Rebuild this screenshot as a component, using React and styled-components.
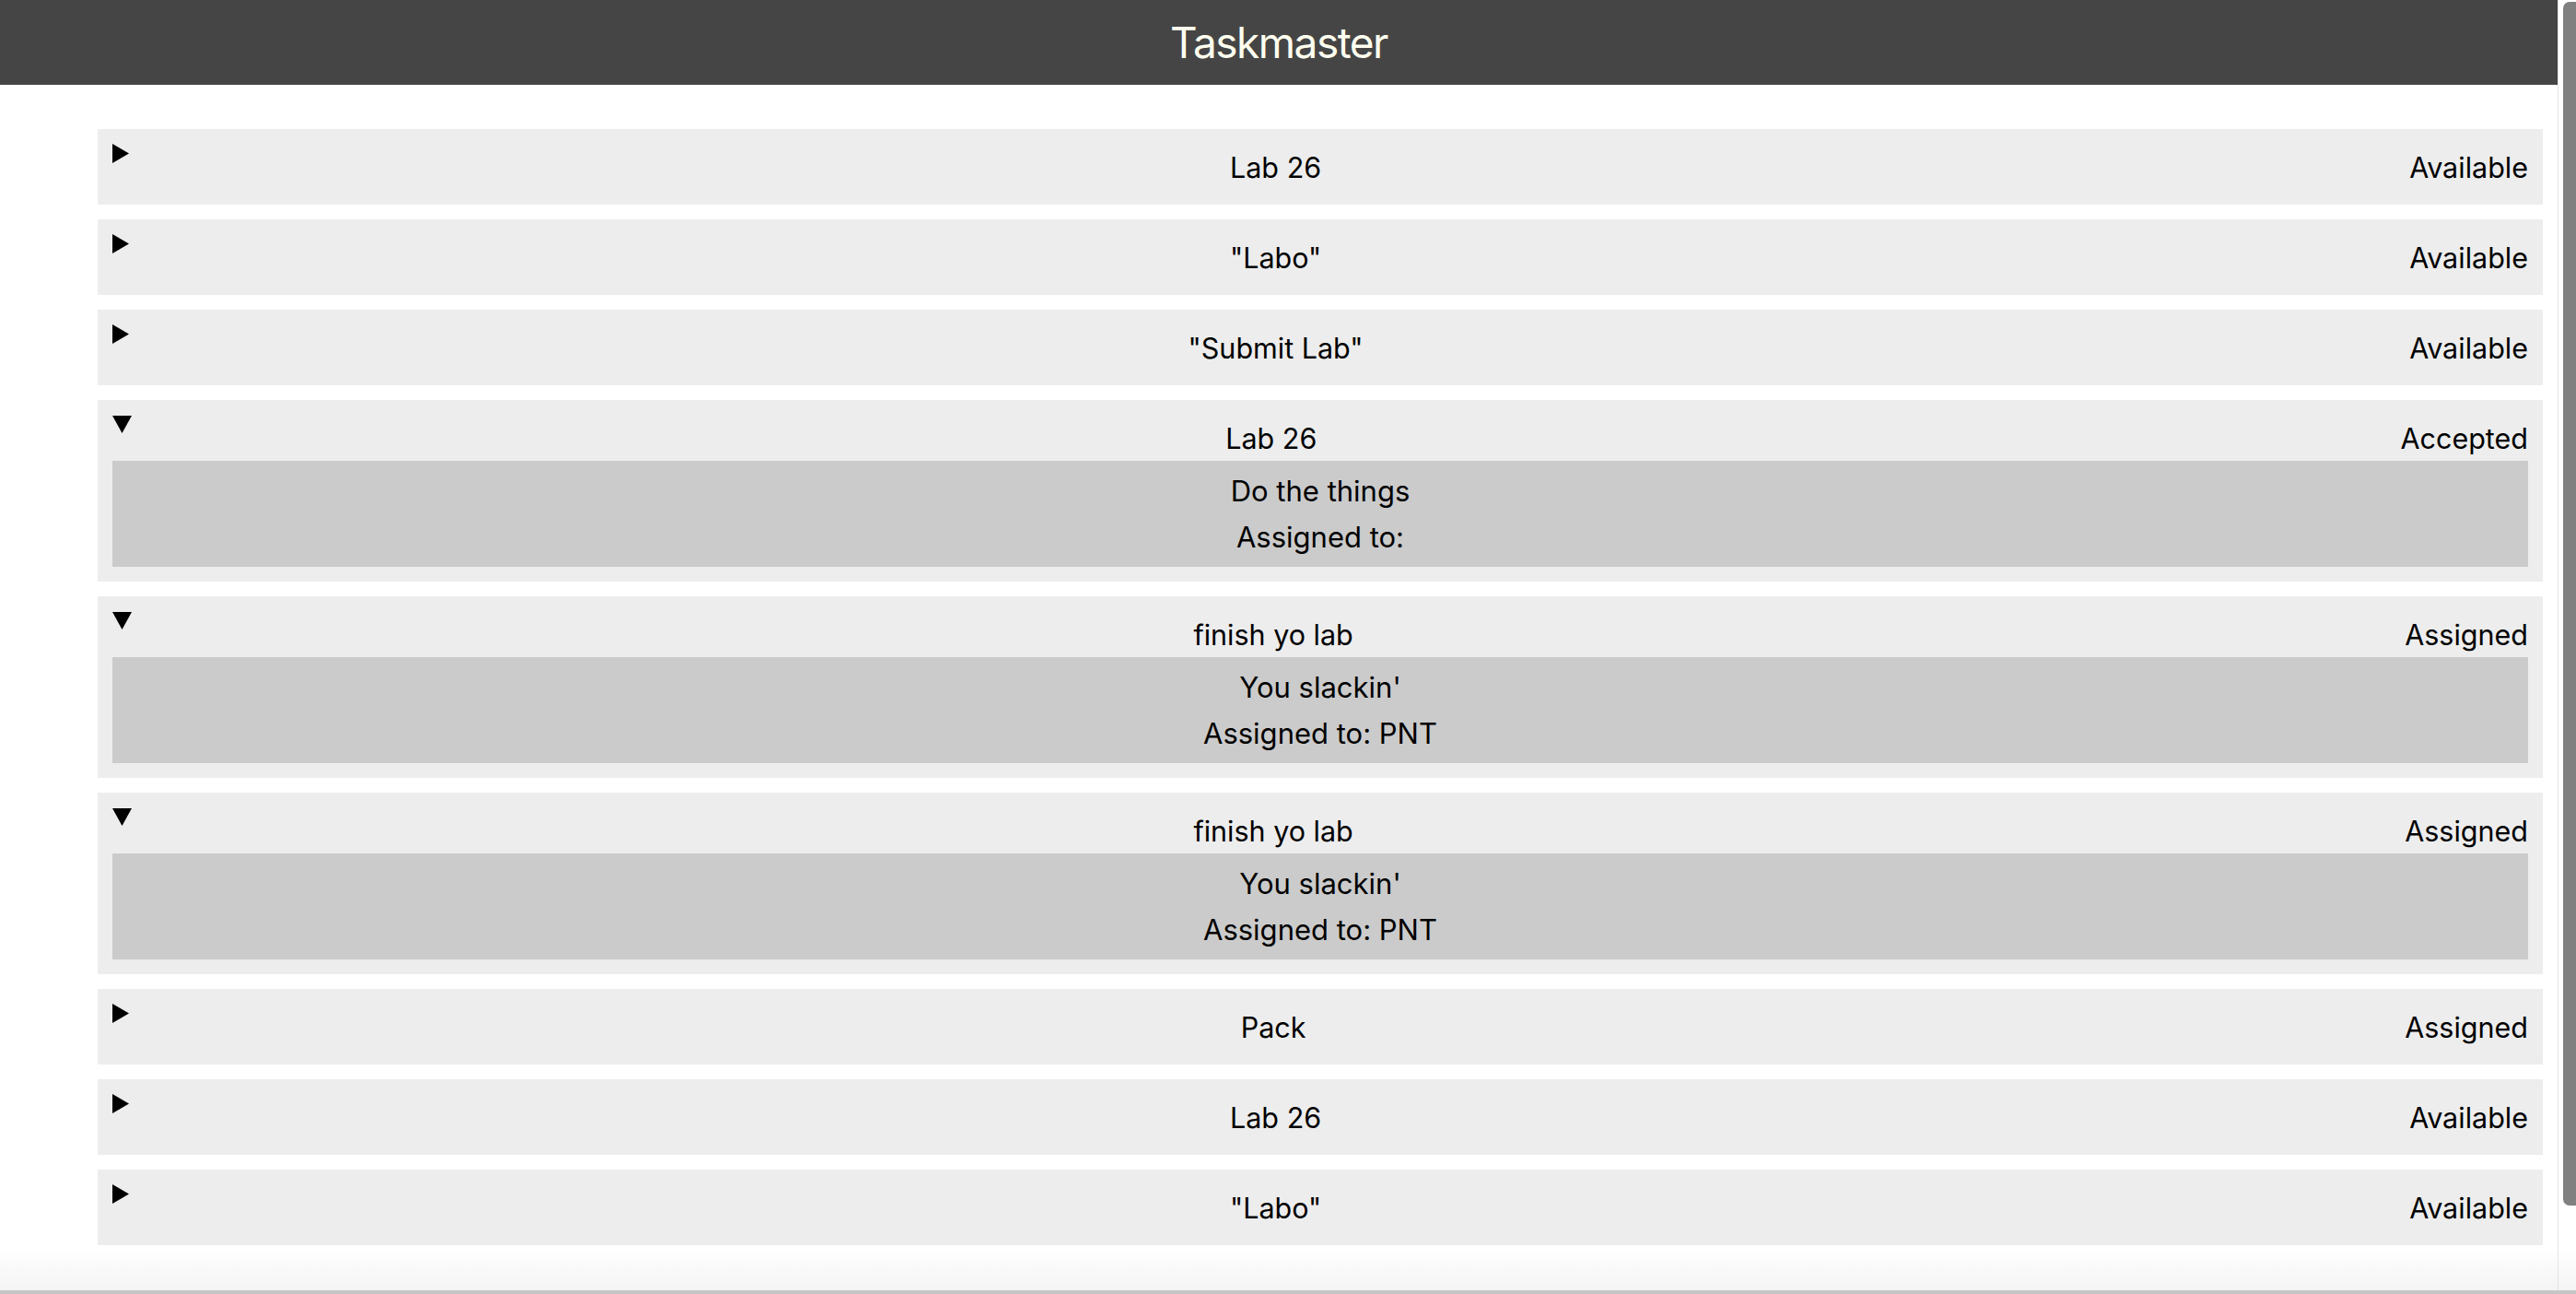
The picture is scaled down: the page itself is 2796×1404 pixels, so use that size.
import React from "react";
import styled, { createGlobalStyle } from "styled-components";

const Global = createGlobalStyle`
  html, body { margin: 0; padding: 0; height: 100%; overflow: hidden; }
  body { font-family: Inter, "Noto Sans", "Liberation Sans", sans-serif; color: #000; background: #fff; }
  #root { height: 100%; }
`;

const Page = styled.div`
  height: 1404px;
  display: flex;
  flex-direction: column;
  background: linear-gradient(to bottom, #ffffff 0, #ffffff 1352px, #f4f4f4 1400px);
`;

const Viewport = styled.div`
  flex: 1;
  display: flex;
  min-height: 0;
`;

const Content = styled.main`
  flex: 1;
  min-width: 0;
  overflow: hidden;
`;

const Header = styled.header`
  height: 92px;
  background: #454545;
  display: flex;
  align-items: center;
  justify-content: center;
`;

const Title = styled.h1`
  margin: 0;
  font-weight: 400;
  font-size: 46px;
  letter-spacing: -1.5px;
  color: #fffff0;
`;

const List = styled.ul`
  list-style: none;
  margin: 0;
  padding: 48px 16px 0 106px;
  display: flex;
  flex-direction: column;
  gap: 16px;
`;

const Row = styled.li`
  background: #ededed;
  padding: 16px;
`;

const Summary = styled.div`
  display: flex;
  align-items: center;
  height: 50px;
  font-size: 30.5px;
`;

const Marker = styled.span`
  align-self: flex-start;
  width: 32px;
  flex: none;
  display: flex;
  padding-top: ${(p) => (p.$open ? "1px" : "0")};
`;

const TaskName = styled.span`
  flex: 1;
  text-align: center;
`;

const Status = styled.span`
  flex: none;
`;

const Body = styled.div`
  background: #cbcbcb;
  padding: 8px 0 7px;
  text-align: center;
  font-size: 31px;
  line-height: 50px;
`;

const Rail = styled.div`
  width: 19px;
  flex: none;
  border-left: 1px solid #e4e4e4;
  display: flex;
  justify-content: flex-end;
  padding-top: 2px;
`;

const Thumb = styled.div`
  width: 14px;
  height: 1306px;
  background: #808080;
  border-radius: 7px 0 0 7px;
`;

const Edge = styled.div`
  height: 4px;
  background: #c6c6c6;
`;

const Triangle = ({ open }) =>
  open ? (
    <svg width="21" height="19" viewBox="0 0 21 19">
      <polygon points="0,0 21,0 10.5,19" fill="#000" />
    </svg>
  ) : (
    <svg width="18" height="21" viewBox="0 0 18 21">
      <polygon points="0,0 18,10.5 0,21" fill="#000" />
    </svg>
  );

const tasks = [
  { name: "Lab 26", status: "Available" },
  { name: '"Labo"', status: "Available" },
  { name: '"Submit Lab"', status: "Available" },
  { name: "Lab 26", status: "Accepted", open: true, desc: "Do the things", assignee: "" },
  { name: "finish yo lab", status: "Assigned", open: true, desc: "You slackin'", assignee: "PNT" },
  { name: "finish yo lab", status: "Assigned", open: true, desc: "You slackin'", assignee: "PNT" },
  { name: "Pack", status: "Assigned" },
  { name: "Lab 26", status: "Available" },
  { name: '"Labo"', status: "Available" },
];

export default function App() {
  return (
    <>
      <Global />
      <Page>
        <Viewport>
          <Content>
            <Header>
              <Title>Taskmaster</Title>
            </Header>
            <List>
              {tasks.map((t, i) => (
                <Row key={i}>
                  <Summary>
                    <Marker $open={t.open}>
                      <Triangle open={t.open} />
                    </Marker>
                    <TaskName>{t.name}</TaskName>
                    <Status>{t.status}</Status>
                  </Summary>
                  {t.open && (
                    <Body>
                      <div>{t.desc}</div>
                      <div>Assigned to: {t.assignee}</div>
                    </Body>
                  )}
                </Row>
              ))}
            </List>
          </Content>
          <Rail>
            <Thumb />
          </Rail>
        </Viewport>
        <Edge />
      </Page>
    </>
  );
}
